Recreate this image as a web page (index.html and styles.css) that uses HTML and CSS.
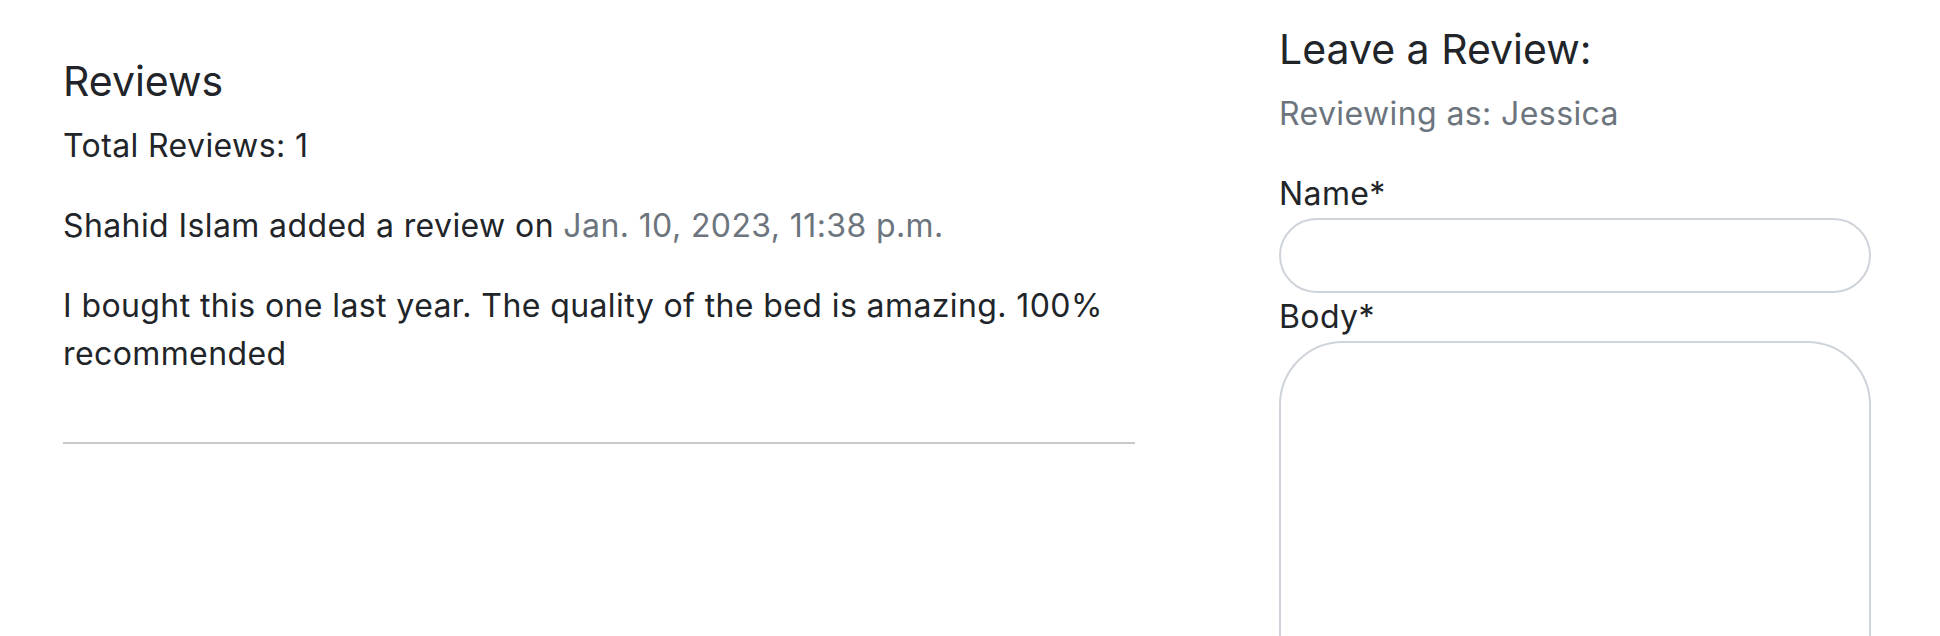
FILE: index.html
```html
<!DOCTYPE html>
<html lang="en">
<head>
<meta charset="utf-8">
<title>Reviews</title>
<link rel="stylesheet" href="styles.css">
</head>
<body>
<div class="page">
  <section class="reviews">
    <h3 class="heading">Reviews</h3>
    <p class="text">Total Reviews: 1</p>
    <div class="review">
      <p class="text">Shahid Islam added a review on <span class="muted">Jan. 10, 2023, 11:38 p.m.</span></p>
      <p class="text">I bought this one last year. The quality of the bed is amazing. 100% recommended</p>
    </div>
    <hr class="divider">
  </section>
  <aside class="form-col">
    <h3 class="heading">Leave a Review:</h3>
    <p class="text muted">Reviewing as: Jessica</p>
    <form class="review-form">
      <label class="label" for="name">Name*</label>
      <input class="field field-input" id="name" type="text">
      <label class="label" for="body">Body*</label>
      <textarea class="field field-area" id="body"></textarea>
    </form>
  </aside>
</div>
</body>
</html>
```

FILE: styles.css
```css
html, body {
  margin: 0;
  padding: 0;
  background: #ffffff;
}

body {
  font-family: "Inter", "Noto Sans", sans-serif;
  color: #212529;
  font-size: 32px;
  line-height: 48px;
}

.page {
  display: flex;
  align-items: flex-start;
  padding: 25px 69px 0 63px;
  gap: 144px;
}

.reviews {
  width: 1072px;
  flex: none;
  margin-top: 32px;
}

.form-col {
  width: 592px;
  flex: none;
}

.heading {
  margin: 0 0 16px 0;
  font-size: 41px;
  line-height: 49px;
  font-weight: 400;
  letter-spacing: 0;
}

.text {
  margin: 0 0 32px 0;
  font-size: 32px;
  line-height: 48px;
  letter-spacing: 0.4px;
}

.muted {
  color: #6c757d;
}

.divider {
  margin: 64px 0 0 0;
  border: 0;
  border-top: 2px solid #c8c9ca;
  height: 0;
}

.review-form {
  display: flex;
  flex-direction: column;
}

.label {
  display: block;
  font-size: 32px;
  line-height: 48px;
  letter-spacing: 0.4px;
}

.field {
  box-sizing: border-box;
  width: 592px;
  border: 2px solid #ced4da;
  border-radius: 64px;
  background: #fff;
  font-family: inherit;
  font-size: 32px;
  padding: 12px 24px;
  margin: 0;
  outline: none;
}

.field-input {
  height: 75px;
}

.field-area {
  height: 480px;
  resize: none;
}
```
